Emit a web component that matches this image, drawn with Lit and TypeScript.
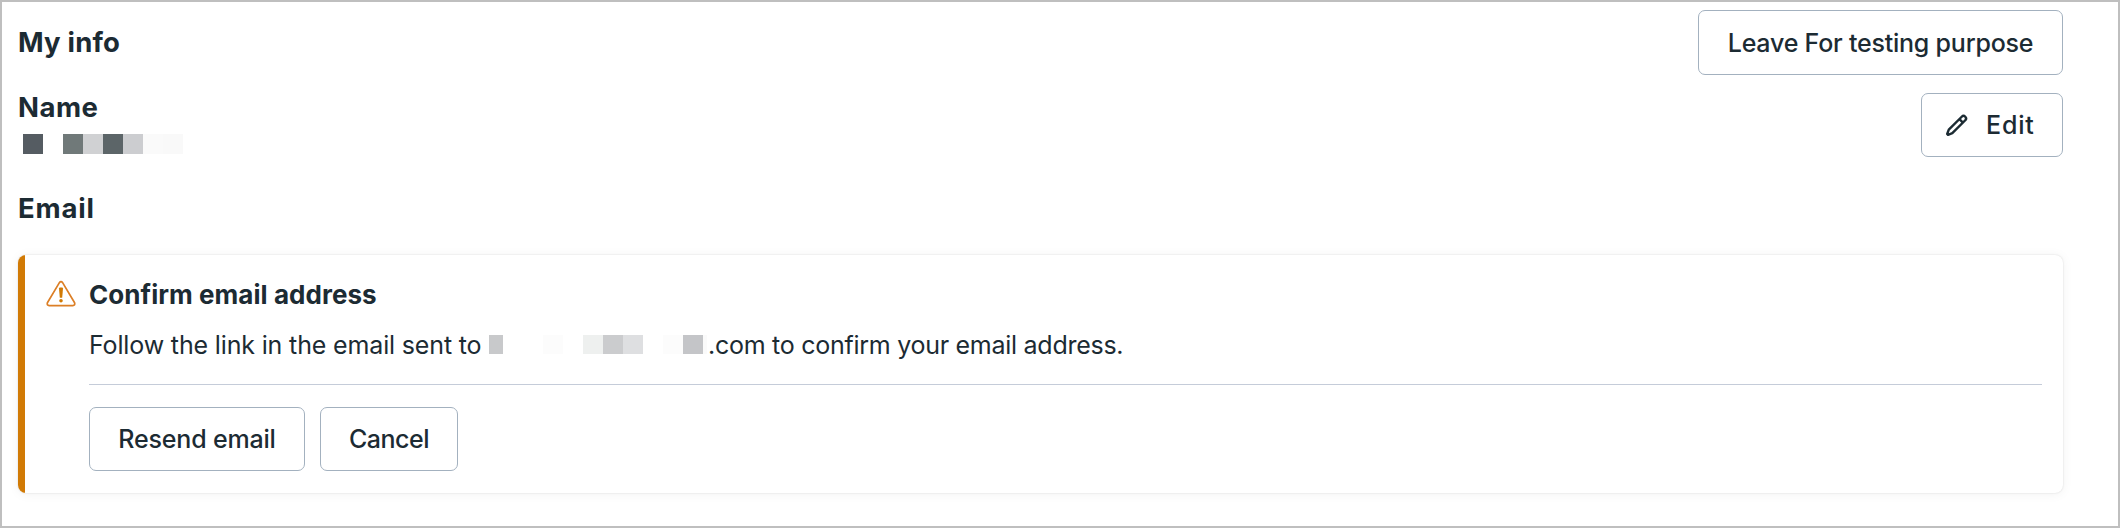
import { LitElement, html, css, svg } from "lit";
import { customElement } from "lit/decorators.js";
import { styleMap } from "lit/directives/style-map.js";

type Cell = [number, string];

const nameCells: Cell[] = [
  [20, "#555c62"], [20, "#ffffff"], [20, "#707979"], [20, "#d0d1d3"],
  [20, "#5c6568"], [20, "#cccdd0"], [20, "#fafafa"], [20, "#f9f9f9"],
];

const emailCells: Cell[] = [
  [14, "#c8c9cb"], [40, "#ffffff"], [20, "#fcfcfc"], [20, "#ffffff"],
  [20, "#eef0ef"], [20, "#cbccce"], [20, "#dedfe1"], [20, "#ffffff"],
  [20, "#fcfcfc"], [20, "#c4c5c8"], [4, "#fafafa"],
];

const pencil = svg`
  <g transform="translate(11.5 11.5) rotate(45)">
    <path d="M-2.5 -9.9 A2.5 2.5 0 0 1 2.5 -9.9 L2.5 8.4 L0.6 12.6 H-0.6 L-2.5 8.4 Z" />
    <path d="M-2.5 -6.6 H2.5" />
  </g>`;

@customElement("app-root")
export class AppRoot extends LitElement {
  static styles = css`
    :host { display: block; font-family: "Inter", sans-serif; color: #1c2b33; }
    * { box-sizing: border-box; }
    .frame {
      height: 528px; border: 2px solid #bfbfbf; background: #fff;
      padding: 8px 55px 0 16px; display: flex; flex-direction: column;
    }
    .row { display: flex; justify-content: space-between; align-items: flex-start; }
    .top { height: 83px; flex: none; }
    .name { height: 101px; flex: none; }
    h2, h3, p { margin: 0; white-space: nowrap; }
    h2 { font-size: 27.5px; line-height: 38px; font-weight: 700; }
    .title { padding-top: 13px; }
    .label { margin-top: -5px; }
    .mosaic { display: flex; height: 20px; margin: 8px 0 0 5px; }
    .email { height: 61px; flex: none; }
    .btn {
      display: inline-flex; align-items: center; justify-content: center;
      height: 64px; border: 1px solid #a3b1bf; border-radius: 7px; background: #fff;
      color: inherit; font-family: inherit; font-size: 25px; font-weight: 500;
      line-height: 34px; padding: 0; white-space: nowrap;
    }
    .leave { width: 365px; height: 65px; }
    .edit { width: 142px; justify-content: flex-start; padding-left: 23px; gap: 18px; }
    .resend { width: 216px; }
    .cancel { width: 138px; }
    .t-info { letter-spacing: 0.2px; }
    .t-name { letter-spacing: 0.5px; }
    .t-email { letter-spacing: 0.85px; }
    .t-leave { letter-spacing: -0.22px; }
    .t-resend { letter-spacing: -0.18px; }
    .t-cancel { letter-spacing: -0.5px; }
    .t-edit { letter-spacing: 0.8px; }
    .t-confirm { letter-spacing: 0.05px; }
    .t-lead { letter-spacing: -0.15px; }
    .t-tail { letter-spacing: -0.27px; }
    .pencil { width: 23px; height: 23px; overflow: visible; fill: none; stroke: #1c2b33; stroke-width: 2.4; stroke-linejoin: round; }
    .card {
      width: 2045px; height: 238px; flex: none; display: flex; background: #fff; border-radius: 8px;
      overflow: hidden; box-shadow: 0 0 2px rgba(0,0,0,.14), 0 1px 12px rgba(0,0,0,.055);
    }
    .bar { width: 7px; background: #d17a05; flex: none; }
    .sign { width: 30px; height: 28px; margin: 25px 13.5px 0 20.5px; flex: none; }
    .body { flex: 1; margin-right: 21px; display: flex; flex-direction: column; }
    .confirm { font-size: 26px; line-height: 36px; padding-top: 22px; height: 72px; }
    .text { display: flex; height: 58px; font-size: 25px; line-height: 36px; border-bottom: 1px solid #c5ccd9; }
    .blur { display: flex; height: 19px; margin-top: 8px; }
    .lead { width: 400px; }
    .tail { padding-left: 1px; }
    .actions { display: flex; gap: 15px; padding-top: 22px; }
  `;

  private mosaic(cells: Cell[], kind: string) {
    return html`<span class=${kind}>${cells.map(
      ([width, background]) =>
        html`<i style=${styleMap({ width: `${width}px`, background })}></i>`
    )}</span>`;
  }

  render() {
    return html`
      <main class="frame">
        <section class="row top">
          <h2 class="title"><span class="t-info">My info</span></h2>
          <button class="btn leave"><span class="t-leave">Leave For testing purpose</span></button>
        </section>
        <section class="row name">
          <div>
            <h2 class="label"><span class="t-name">Name</span></h2>
            ${this.mosaic(nameCells, "mosaic")}
          </div>
          <button class="btn edit">
            <svg class="pencil" viewBox="0 0 23 23">${pencil}</svg>
            <span class="t-edit">Edit</span>
          </button>
        </section>
        <section class="email"><h2 class="label"><span class="t-email">Email</span></h2></section>
        <section class="card">
          <div class="bar"></div>
          <svg class="sign" viewBox="0 0 30 28">
            <path d="M13.4 2.6 Q15 0.6 16.6 2.6 L28.6 22.8 Q29.4 25.4 26.8 25.6 L3.2 25.6 Q0.6 25.4 1.4 22.8 Z"
              fill="none" stroke="#dc7f26" stroke-width="1.7" stroke-linejoin="round" />
            <path d="M13 8.6 Q13 7.6 14 7.6 H16 Q17 7.6 17 8.6 L16.2 17.8 H13.8 Z" fill="#d17a05" />
            <circle cx="15" cy="20.8" r="1.8" fill="#d17a05" />
          </svg>
          <div class="body">
            <h3 class="confirm"><span class="t-confirm">Confirm email address</span></h3>
            <p class="text">
              <span class="lead"><span class="t-lead">Follow the link in the email sent to</span></span>
              ${this.mosaic(emailCells, "blur")}
              <span class="tail"><span class="t-tail">.com to confirm your email address.</span></span>
            </p>
            <div class="actions">
              <button class="btn resend"><span class="t-resend">Resend email</span></button>
              <button class="btn cancel"><span class="t-cancel">Cancel</span></button>
            </div>
          </div>
        </section>
      </main>`;
  }
}
